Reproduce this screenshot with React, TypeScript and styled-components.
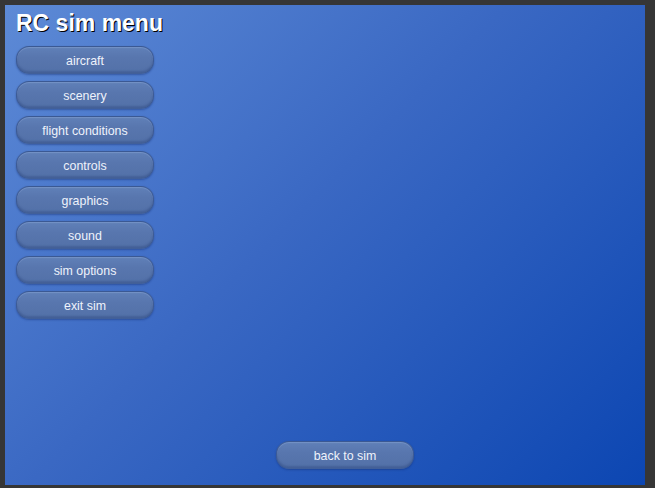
import React from "react";
import styled, { createGlobalStyle } from "styled-components";

const Global = createGlobalStyle`
  html, body { margin: 0; padding: 0; background: #363636; }
  body { font-family: "Liberation Sans", Arial, sans-serif; }
`;

const Frame = styled.div`
  width: 655px;
  height: 488px;
  background: #363636;
  padding: 5px 0 0 5px;
  box-sizing: border-box;
`;

const Panel = styled.div`
  width: 640px;
  height: 480px;
  box-sizing: border-box;
  padding: 7px 0 0 11px;
  background: linear-gradient(135deg, #5d8ad6 0%, #3a68c3 45%, #0c46b2 100%);
  display: flex;
  flex-direction: column;
`;

const Title = styled.h1`
  margin: 0;
  font-size: 23px;
  line-height: 22px;
  font-weight: bold;
  color: #ffffff;
  text-shadow: 1px 1px 0 #000;
  letter-spacing: 0;
`;

const Menu = styled.nav`
  margin-top: 12px;
  display: flex;
  flex-direction: column;
  gap: 7px;
`;

const PillButton = styled.button`
  width: 138px;
  height: 28px;
  border-radius: 13px;
  border: 1px solid rgba(40, 70, 130, 0.55);
  background: linear-gradient(180deg, #6080b8 0%, #5876ae 40%, #5371a8 100%);
  box-shadow: inset 0 1px 1px rgba(150, 175, 220, 0.4), inset 0 -2px 2px rgba(40, 65, 120, 0.35),
    0 1px 2px rgba(20, 45, 110, 0.45);
  color: #eef2fb;
  font-family: "Liberation Sans", Arial, sans-serif;
  font-size: 12.4px;
  padding: 1px 0 0;
  cursor: pointer;
  box-sizing: border-box;
`;

const Footer = styled.div`
  margin-top: auto;
  margin-bottom: 16px;
  padding-left: 260px;
`;

const items = [
  "aircraft",
  "scenery",
  "flight conditions",
  "controls",
  "graphics",
  "sound",
  "sim options",
  "exit sim",
];

export default function App() {
  return (
    <>
      <Global />
      <Frame>
        <Panel>
          <Title>RC sim menu</Title>
          <Menu>
            {items.map((t) => (
              <PillButton key={t}>{t}</PillButton>
            ))}
          </Menu>
          <Footer>
            <PillButton>back to sim</PillButton>
          </Footer>
        </Panel>
      </Frame>
    </>
  );
}
